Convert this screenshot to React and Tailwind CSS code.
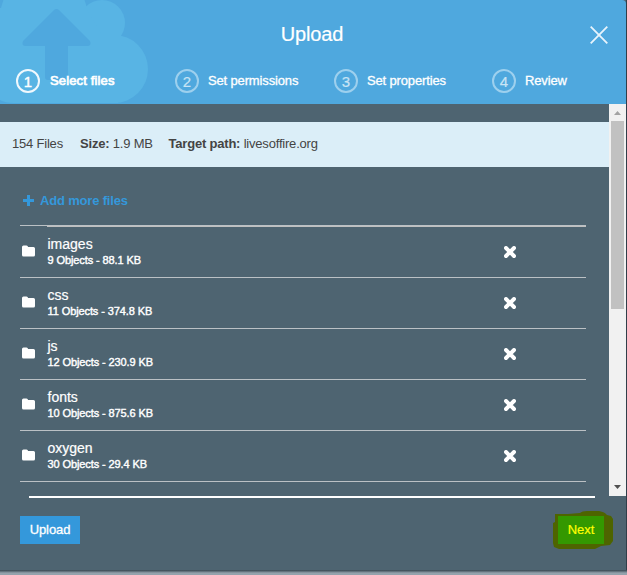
const steps = [
  { n: '1', label: 'Select files', active: true },
  { n: '2', label: 'Set permissions' },
  { n: '3', label: 'Set properties' },
  { n: '4', label: 'Review' },
];

const rows = [
  { name: 'images', info: '9 Objects - 88.1 KB' },
  { name: 'css', info: '11 Objects - 374.8 KB' },
  { name: 'js', info: '12 Objects - 230.9 KB' },
  { name: 'fonts', info: '10 Objects - 875.6 KB' },
  { name: 'oxygen', info: '30 Objects - 29.4 KB' },
];

function CloudUpload() {
  return (
    <svg className="absolute left-0 top-0" width="150" height="104" viewBox="0 0 150 104">
      <g fill="#58b4e4">
        <circle cx="44" cy="17" r="44" />
        <circle cx="102" cy="23" r="23" />
        <circle cx="114" cy="69" r="34" />
        <path d="M0 8H86L102 35H118V103H14Q5 103 0 100Z" />
      </g>
      <path
        d="M54 10Q56.500 8 59 10L90 41Q92 46 87 46H68V77Q68 80 65 80H48Q45 80 45 77V46H26Q21 46 23 41Z"
        fill="#4fa8de"
      />
    </svg>
  );
}

function Folder() {
  return (
    <svg width="13" height="12" viewBox="0 0 13 12">
      <path d="M0 2Q0 .5 1.500 .5H4.500Q6 .5 6 2H11.500Q13 2 13 3.500V10Q13 11.500 11.500 11.500H1.500Q0 11.500 0 10Z" fill="#fff" />
    </svg>
  );
}

function Header() {
  return (
    <header className="relative h-[104px] overflow-hidden rounded-tr bg-[#4fa8de] text-white">
      <CloudUpload />
      <div className="relative flex h-[69px] justify-center pt-[22px]">
        <h1 className="-ml-[2px] text-[20px] leading-6 tracking-[-0.15px] [-webkit-text-stroke:0.2px_white]">Upload</h1>
        <svg className="absolute left-[590px] top-[26px]" width="18" height="18" viewBox="0 0 18 18">
          <path d="M.7 .7L17.300 17.300M17.300 .7L.7 17.300" stroke="#e8f4fc" strokeWidth="1.800" />
        </svg>
      </div>
      <ol className="relative grid grid-cols-[159px_159px_158px_120px] pl-4">
        {steps.map((s) => (
          <li key={s.n} className="flex h-6 items-center gap-[9px] whitespace-nowrap">
            <span
              className={
                s.active
                  ? 'flex size-6 items-center justify-center rounded-full border-2 border-[#f0f8fd] text-[15px] leading-none [-webkit-text-stroke:0.4px_white]'
                  : 'flex size-6 items-center justify-center rounded-full border-2 border-[#9dd0ee] text-[15px] leading-none text-[#c8e4f5] [-webkit-text-stroke:0.2px_#c8e4f5]'
              }
            >
              {s.n}
            </span>
            <span
              className={
                s.active
                  ? 'pl-px text-[13px] leading-4 tracking-[0.14px] [-webkit-text-stroke:0.7px_white]'
                  : 'text-[13px] leading-4 tracking-[-0.15px] [-webkit-text-stroke:0.3px_white]'
              }
            >
              {s.label}
            </span>
          </li>
        ))}
      </ol>
    </header>
  );
}

function FileRow({ row, first }) {
  return (
    <li className={first ? 'flex h-[52px] items-center border-b border-[#bbc1c5]' : 'flex h-[51px] items-center border-b border-[#bbc1c5]'}>
      <div className="w-[27px] pb-[2px] pl-[2px]">
        <Folder />
      </div>
      <div className={first ? 'flex h-full grow items-start border-t border-[#c0c0c0] pt-[9px]' : 'flex h-full grow items-start pt-[9px]'}>
        <div className="w-[457px] pl-[0.5px]">
          <div className="text-[14px] leading-4 text-white [-webkit-text-stroke:0.2px_white]">{row.name}</div>
          <div className="text-[11px] leading-4 tracking-[-0.1px] text-white [-webkit-text-stroke:0.4px_white]">{row.info}</div>
        </div>
        <svg className="mt-[9.5px]" width="12" height="12" viewBox="0 0 12 12">
          <path d="M2 2L10 10M10 2L2 10" stroke="#fff" strokeWidth="3.900" strokeLinecap="round" />
        </svg>
      </div>
    </li>
  );
}

function Scrollbar() {
  return (
    <div className="flex w-[17px] flex-col items-center justify-between bg-[#f1f1f1]">
      <div className="flex flex-col items-center">
        <svg width="17" height="17" viewBox="0 0 17 17">
          <path d="M5 11L8.500 7L12 11Z" fill="#a3a3a3" />
        </svg>
        <div className="h-[188px] w-[13px] bg-[#c1c1c1]" />
      </div>
      <svg width="17" height="17" viewBox="0 0 17 17">
        <path d="M5 6L8.500 10L12 6Z" fill="#505050" />
      </svg>
    </div>
  );
}

export default function App() {
  return (
    <div className="h-[575px] w-[627px] overflow-hidden bg-[#303e49] font-['Liberation_Sans',Arial,sans-serif]">
      <div className="h-[570px] w-[626px] bg-[#4e6471]">
        <Header />
        <div className="flex h-[392px]">
          <main className="w-[609px] pt-[18px]">
            <div className="flex h-[45px] items-center whitespace-nowrap bg-[#dbeef8] pb-[2px] pl-3 text-[13px] tracking-[-0.2px] text-[#444]">
              <span className="w-[68px]">154 Files</span>
              <span className="w-[88.5px]"><b>Size:</b> 1.9 MB</span>
              <span><b>Target path:</b> livesoffire.org</span>
            </div>
            <div className="flex h-[58px] items-center gap-[6px] pl-[23px] pt-[9px] text-[13px] font-bold tracking-[-0.18px] text-[#3498db]">
              <svg width="11" height="11" viewBox="0 0 11 11">
                <path d="M5.500 0V11M0 5.500H11" stroke="currentColor" strokeWidth="3" />
              </svg>
              <span>Add more files</span>
            </div>
            <ul className="ml-5 w-[566px] border-t border-[#bbc1c5]">
              {rows.map((r, i) => (
                <FileRow key={r.name} row={r} first={i === 0} />
              ))}
            </ul>
          </main>
          <Scrollbar />
        </div>
        <footer>
          <div className="ml-[29px] h-[2px] w-[566px] bg-white" />
          <div className="flex items-start justify-between pl-5 pr-[13px] pt-[13px] text-[13px]">
            <button className="mt-[5px] h-7 w-[60px] bg-[#3498db] tracking-[-0.1px] text-white [-webkit-text-stroke:0.3px_white]">Upload</button>
            <div className="relative flex h-10 w-[60px] pl-[5px] pt-[5px]">
              <svg className="absolute left-0 top-0" width="60" height="39" viewBox="0 0 60 39">
                <path d="M2 3H15L27 2Q29 0 34 0H46Q52 1 54 4L58 5L60 8V30L57 34L48 35L42 38H6L1 36L0 32V12L2 11Z" fill="#4e6400" />
              </svg>
              <button className="relative h-7 w-[46px] bg-[#349800] text-[#ffff00] [-webkit-text-stroke:0.2px_#ffff00]">Next</button>
            </div>
          </div>
        </footer>
      </div>
      <div className="h-[5px] bg-linear-to-b from-[#364650] to-[#94a2ac] to-60%" />
    </div>
  );
}
